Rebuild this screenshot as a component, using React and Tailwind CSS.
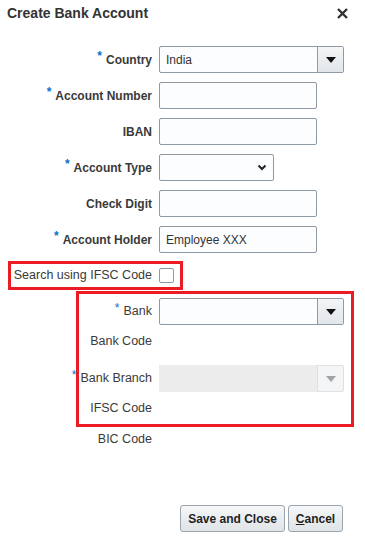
import React from 'react';

function Req() {
  return <span className="text-[#0572ce] text-[12px] leading-none mr-[4px] -translate-y-[4px]">*</span>;
}

function Label({ text, req, bold = true, size = 'text-[12px]' }) {
  return (
    <div className={`flex justify-end items-center shrink-0 whitespace-nowrap ${size} ${bold ? 'font-bold' : 'font-normal'} text-[#3a3a3a]`}>
      {req && <Req />}
      <span>{text}</span>
    </div>
  );
}

function Arrow({ muted }) {
  return (
    <svg width="10" height="6" viewBox="0 0 10 6">
      <path d="M0 0 L10 0 L5 6 Z" fill={muted ? '#a3a3a3' : '#111'} />
    </svg>
  );
}

function TextBox({ value, width = 'w-[158px]' }) {
  return (
    <div className={`${width} h-[27px] border border-[#8e9aa5] rounded-[2px] bg-[#fcfdff] flex items-center px-[6px] text-[12px] text-[#333]`}>
      {value}
    </div>
  );
}

function Choice({ value, disabled }) {
  if (disabled) {
    return (
      <div className="w-[185px] h-[27px] flex">
        <div className="flex-1 bg-[#ececec]" />
        <div className="w-[27px] bg-[#f4f5f6] border border-[#dde1e4] rounded-r-[2px] flex items-center justify-center">
          <Arrow muted />
        </div>
      </div>
    );
  }
  return (
    <div className="w-[185px] h-[27px] border border-[#8e9aa5] rounded-[2px] bg-[#fcfdff] flex text-[12px] text-[#333]">
      <div className="flex-1 flex items-center px-[6px]">{value}</div>
      <div className="w-[26px] border-l border-[#8e9aa5] bg-gradient-to-b from-[#f3f5f6] to-[#e2e6e9] flex items-center justify-center">
        <Arrow />
      </div>
    </div>
  );
}

function Row({ label, req, children, labelWidth = 'w-[152px]', bold = true, size }) {
  return (
    <div className="flex items-center h-[27px]">
      <div className={labelWidth}>
        <Label text={label} req={req} bold={bold} size={size} />
      </div>
      <div className="ml-[7px]">{children}</div>
    </div>
  );
}

export default function App() {
  return (
    <div className="w-[365px] h-[546px] bg-white flex flex-col font-['Liberation_Sans',Arial,sans-serif]">
      <div className="h-[26px] flex items-center justify-between pl-[7px] pr-[17px]">
        <h1 className="text-[14px] font-bold text-[#333]">Create Bank Account</h1>
        <svg width="11" height="11" viewBox="0 0 11 11">
          <path d="M1 1 L10 10 M10 1 L1 10" stroke="#333" strokeWidth="2.4" />
        </svg>
      </div>

      <div className="mt-[20px] flex flex-col gap-[9px]">
        <Row label="Country" req>
          <Choice value="India" />
        </Row>
        <Row label="Account Number" req>
          <TextBox />
        </Row>
        <Row label="IBAN">
          <TextBox />
        </Row>
        <Row label="Account Type" req>
          <div className="w-[115px] h-[27px] border border-[#8e9aa5] rounded-[2px] bg-[#fcfdff] flex items-center justify-end pr-[6px]">
            <svg width="10" height="7" viewBox="0 0 10 7">
              <path d="M1.5 1.5 L5 5 L8.5 1.5" stroke="#222" strokeWidth="2" fill="none" />
            </svg>
          </div>
        </Row>
        <Row label="Check Digit">
          <TextBox />
        </Row>
        <Row label="Account Holder" req>
          <TextBox value="Employee XXX" />
        </Row>
      </div>

      <div className="mt-[8px] ml-[8px] w-[175px] h-[29px] border-[3px] border-[#ec1c24] flex items-center">
        <div className="w-[141px]">
          <Label text="Search using IFSC Code" bold={false} size="text-[12.5px]" />
        </div>
        <div className="ml-[7px] w-[15px] h-[15px] border border-[#8e9aa5] rounded-[2px] bg-white" />
      </div>

      <div className="mt-[1px] ml-[76px] w-[278px] h-[136px] border-[3px] border-[#ec1c24] flex flex-col pt-[4px]">
        <Row label="Bank" req labelWidth="w-[73px]" bold={false} size="text-[12.5px]">
          <Choice />
        </Row>
        <div className="h-[32px] flex items-center w-[73px] justify-end">
          <Label text="Bank Code" bold={false} size="text-[12.5px]" />
        </div>
        <div className="mt-[8px]">
          <Row label="Bank Branch" req labelWidth="w-[73px]" bold={false} size="text-[12.5px]">
            <Choice disabled />
          </Row>
        </div>
        <div className="h-[32px] flex items-center w-[73px] justify-end">
          <Label text="IFSC Code" bold={false} size="text-[12.5px]" />
        </div>
      </div>

      <div className="h-[24px] flex items-center w-[152px] justify-end">
        <Label text="BIC Code" bold={false} size="text-[12.5px]" />
      </div>

      <div className="mt-[54px] flex justify-end gap-[3px] pr-[22px]">
        <button className="w-[105px] h-[27px] border border-[#9aa5af] rounded-[3px] bg-gradient-to-b from-[#f5f7f8] to-[#e0e4e7] text-[12px] font-bold text-[#1f1f1f]">
          Save and Close
        </button>
        <button className="w-[55px] h-[27px] border border-[#9aa5af] rounded-[3px] bg-gradient-to-b from-[#f5f7f8] to-[#e0e4e7] text-[12px] font-bold text-[#1f1f1f]">
          <span className="underline">C</span>ancel
        </button>
      </div>
    </div>
  );
}
